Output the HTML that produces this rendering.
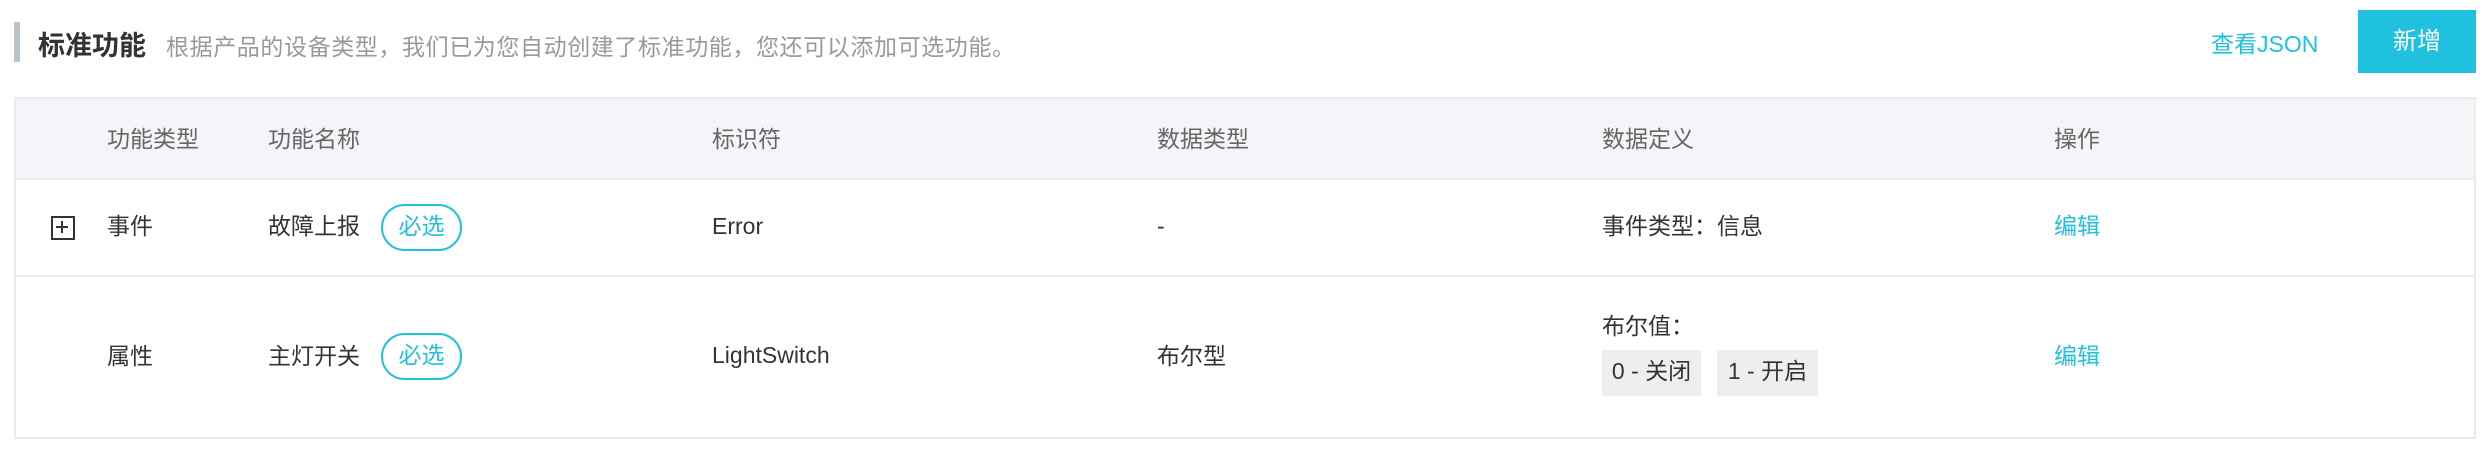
<!DOCTYPE html>
<html><head><meta charset="utf-8"><style>
body{margin:0;width:2486px;height:454px;background:#fff;font-family:"Liberation Sans","Noto Sans CJK SC",sans-serif;position:relative;overflow:hidden;color:#333}
.a{position:absolute;white-space:nowrap}
.bar{left:14px;top:22px;width:6px;height:40px;background:#b8c3ca}
.tbl{left:14px;top:97px;width:2458px;height:338px;border:2px solid #ebebeb;box-sizing:content-box}
.hd{left:16px;top:99px;width:2458px;height:79px;background:#f4f5f8;border-bottom:2px solid #ebebeb}
.l1{left:16px;top:275px;width:2458px;height:2px;background:#ebebeb}
.th{font-size:23px;color:#666;top:120px}
.td{font-size:23px;color:#333}
.tag{border:2px solid #22c0dc;border-radius:24px;color:#22c0dc;font-size:23px;width:77px;height:43px;line-height:40px;text-align:center}
.g{background:#eee;font-size:23px;height:46px;line-height:42px;text-align:center}
.c{color:#22c0dc}
</style></head><body>
<div class="a bar"></div>
<div class="a" style="left:38px;top:24px;font-size:27px;font-weight:bold;color:#333">标准功能</div>
<div class="a" style="left:166px;top:28px;font-size:23px;color:#999;letter-spacing:0.6px">根据产品的设备类型，我们已为您自动创建了标准功能，您还可以添加可选功能。</div>
<div class="a c" style="left:2211px;top:25px;font-size:23px">查看JSON</div>
<div class="a" style="left:2358px;top:10px;width:118px;height:63px;background:#20c1de;color:#fff;font-size:24px;line-height:64px;text-align:center">新增</div>
<div class="a tbl"></div>
<div class="a hd"></div>
<div class="a l1"></div>
<div class="a th" style="left:107px">功能类型</div>
<div class="a th" style="left:268px">功能名称</div>
<div class="a th" style="left:712px">标识符</div>
<div class="a th" style="left:1157px">数据类型</div>
<div class="a th" style="left:1602px">数据定义</div>
<div class="a th" style="left:2054px">操作</div>
<div class="a" style="left:51px;top:216px;width:20px;height:20px;border:2px solid #333"></div>
<div class="a" style="left:56px;top:226px;width:12px;height:2px;background:#333"></div>
<div class="a" style="left:61px;top:221px;width:2px;height:12px;background:#333"></div>
<div class="a td" style="left:107px;top:207px">事件</div>
<div class="a td" style="left:268px;top:207px">故障上报</div>
<div class="a tag" style="left:381px;top:204px">必选</div>
<div class="a td" style="left:712px;top:213px">Error</div>
<div class="a td" style="left:1157px;top:213px">-</div>
<div class="a td" style="left:1602px;top:207px">事件类型：信息</div>
<div class="a td c" style="left:2054px;top:207px">编辑</div>
<div class="a td" style="left:107px;top:337px">属性</div>
<div class="a td" style="left:268px;top:337px">主灯开关</div>
<div class="a tag" style="left:381px;top:333px">必选</div>
<div class="a td" style="left:712px;top:342px">LightSwitch</div>
<div class="a td" style="left:1157px;top:337px">布尔型</div>
<div class="a td" style="left:1602px;top:307px">布尔值：</div>
<div class="a g" style="left:1602px;top:350px;width:99px">0 - 关闭</div>
<div class="a g" style="left:1717px;top:350px;width:101px">1 - 开启</div>
<div class="a td c" style="left:2054px;top:337px">编辑</div>
</body></html>
